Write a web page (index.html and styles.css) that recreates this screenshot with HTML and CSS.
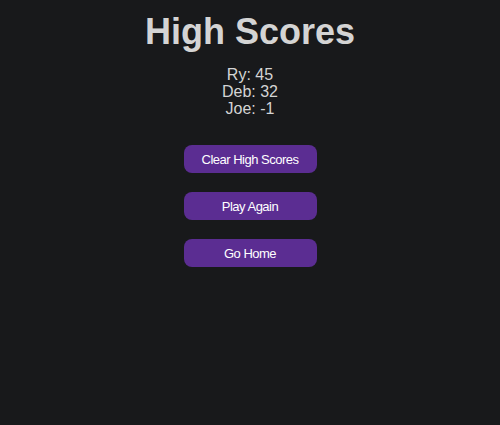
FILE: index.html
```html
<!DOCTYPE html>
<html>
<head>
<meta charset="utf-8">
<link rel="stylesheet" href="styles.css">
</head>
<body>
<main class="page">
  <h1 class="title">High Scores</h1>
  <ul class="scores">
    <li>Ry: 45</li>
    <li>Deb: 32</li>
    <li>Joe: -1</li>
  </ul>
  <div class="actions">
    <button class="btn">Clear High Scores</button>
    <button class="btn">Play Again</button>
    <button class="btn">Go Home</button>
  </div>
</main>
</body>
</html>
```

FILE: styles.css
```css
html, body {
  margin: 0;
  padding: 0;
  background: #18191b;
  height: 100%;
}
.page {
  display: flex;
  flex-direction: column;
  align-items: center;
  font-family: "Liberation Sans", Arial, sans-serif;
  color: #d4d4d4;
}
.title {
  margin: 11px 0 0;
  font-size: 36px;
  line-height: 41px;
  font-weight: bold;
}
.scores {
  list-style: none;
  margin: 14px 0 0;
  padding: 0;
  font-size: 16px;
  line-height: 17px;
  text-align: center;
}
.actions {
  display: flex;
  flex-direction: column;
  align-items: center;
  gap: 19px;
  margin-top: 28px;
}
.btn {
  width: 133px;
  height: 28px;
  border: none;
  border-radius: 8px;
  background: #5b2d92;
  color: #ffffff;
  font-family: "Liberation Sans", Arial, sans-serif;
  font-size: 13px;
  letter-spacing: -0.5px;
  padding: 0;
}
```
